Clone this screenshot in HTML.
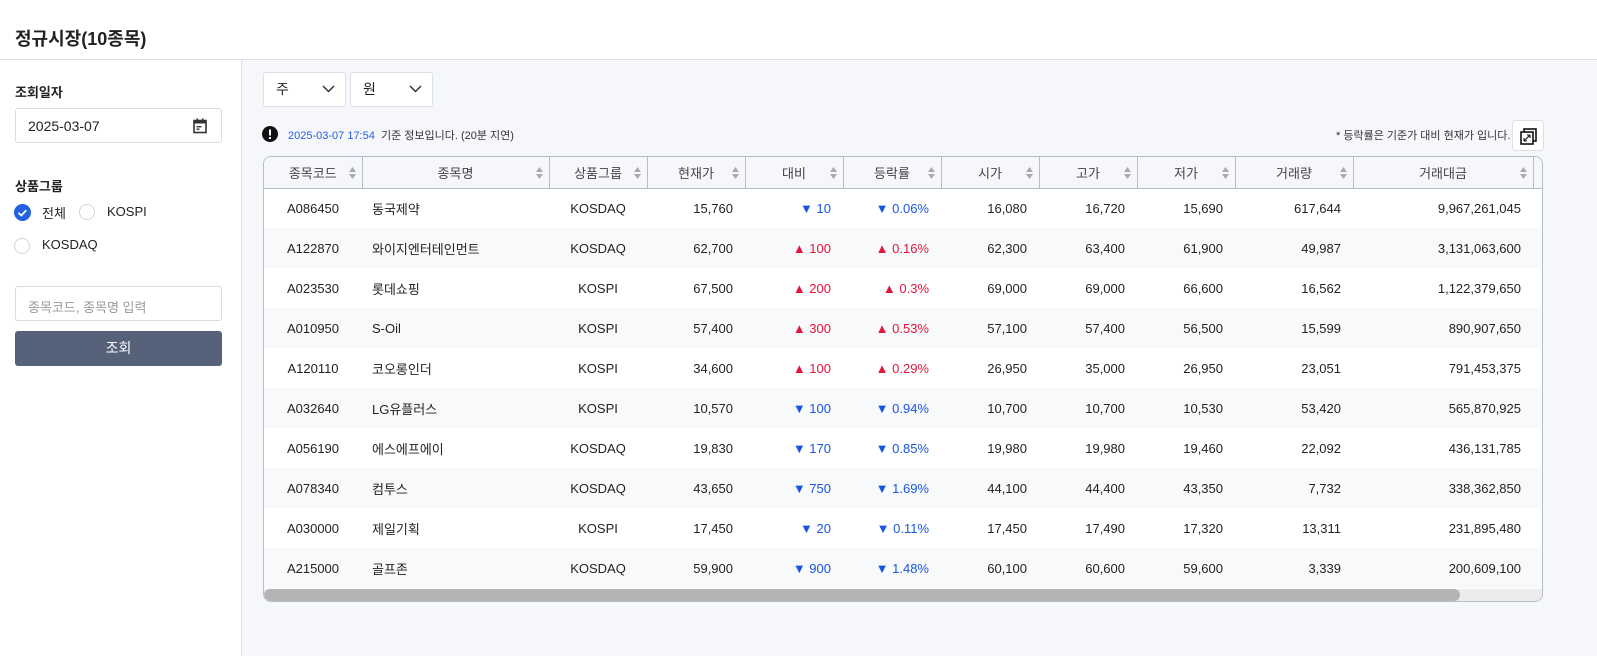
<!DOCTYPE html>
<html><head><meta charset="utf-8"><style>
*{box-sizing:border-box;margin:0;padding:0}
body{width:1597px;height:656px;overflow:hidden;background:#f6f7fa;font-family:"Liberation Sans","Noto Sans CJK KR",sans-serif;color:#222;font-size:13px;position:relative}
.hdr{position:absolute;left:0;top:0;width:1597px;height:60px;background:#fff;border-bottom:1px solid #dcdfe5}
.hdr h1{position:absolute;left:15px;top:25px;font-size:18px;font-weight:bold;color:#222}
.left{position:absolute;left:0;top:60px;width:242px;height:596px;background:#fff;border-right:1px solid #dcdfe5}
.lbl{position:absolute;left:15px;font-size:13px;font-weight:bold}
.inp{position:absolute;left:15px;width:207px;height:35px;border:1px solid #d8dce3;border-radius:3px;background:#fff}
.btn{position:absolute;left:15px;top:271px;width:207px;height:35px;background:#56627a;border-radius:3px;color:#fff;font-size:14px;text-align:center;line-height:35px}
.rad{position:absolute;width:16px;height:16px;border-radius:50%;border:1px solid #d0d4db;background:#fff}
.sel{position:absolute;top:72px;height:35px;width:83px;background:#fff;border:1px solid #dcdfe5;border-radius:3px;font-size:14px;line-height:33px;padding-left:12px}
.sel svg{position:absolute;right:10px;top:12px}
.tw{position:absolute;left:263px;top:156px;width:1280px;height:446px;border:1px solid #b5bdcc;border-radius:8px;overflow:hidden;background:#fff}
table{border-collapse:collapse;table-layout:fixed;width:1400px}
th{height:31px;background:#f5f7fb;border-right:1px solid #b5bdcc;border-bottom:1px solid #b5bdcc;font-weight:normal;color:#444;font-size:13px;position:relative}
td{height:40px;font-size:13px;color:#222}
tr.a td{background:#f7f9fb}
.c{text-align:center}.r{text-align:right;padding-right:12px}.l{padding-left:10px}
.u{color:#e0163c}.d{color:#1a55e0}
.sb{position:absolute;left:0;top:432px;width:1280px;height:12px;background:#ececec}
.sb div{width:1196px;height:12px;background:#b4b4b4;border-radius:6px}
</style></head><body>
<div class="hdr"><h1>정규시장(10종목)</h1></div>
<div class="left">
<div class="lbl" style="top:22px">조회일자</div>
<div class="inp" style="top:48px;padding:9px 0 0 12px;font-size:14px">2025-03-07
<svg style="position:absolute;right:14px;top:9px" width="14" height="16" viewBox="0 0 14 16"><rect x="1" y="2.5" width="12" height="12" fill="none" stroke="#333" stroke-width="1.6"/><rect x="1" y="2.5" width="12" height="3" fill="#333"/><rect x="3.5" y="0.5" width="1.6" height="3" fill="#333"/><rect x="8.9" y="0.5" width="1.6" height="3" fill="#333"/><rect x="3.5" y="8" width="5" height="1.4" fill="#333"/><rect x="3.5" y="10.5" width="3" height="1.4" fill="#333"/></svg></div>
<div class="lbl" style="top:116px">상품그룹</div>
<svg style="position:absolute;left:14px;top:144px" width="17" height="17"><circle cx="8.5" cy="8.5" r="8.5" fill="#2360e0"/><path d="M4.5 8.7l2.8 2.8 5-5.2" fill="none" stroke="#fff" stroke-width="1.8"/></svg>
<div style="position:absolute;left:42px;top:143px">전체</div>
<div class="rad" style="left:79px;top:144px"></div>
<div style="position:absolute;left:107px;top:144px">KOSPI</div>
<div class="rad" style="left:14px;top:178px"></div>
<div style="position:absolute;left:42px;top:177px">KOSDAQ</div>
<div class="inp" style="top:226px;padding:10px 0 0 12px;color:#999;font-size:13px">종목코드, 종목명 입력</div>
<div class="btn">조회</div>
</div>
<div class="sel" style="left:263px">주<svg width="13" height="8"><path d="M1 1l5.5 5.5L12 1" fill="none" stroke="#333" stroke-width="1.5"/></svg></div>
<div class="sel" style="left:350px">원<svg width="13" height="8"><path d="M1 1l5.5 5.5L12 1" fill="none" stroke="#333" stroke-width="1.5"/></svg></div>
<svg style="position:absolute;left:262px;top:126px" width="16" height="16"><circle cx="8" cy="8" r="8" fill="#111"/><rect x="7" y="3.5" width="2" height="6" fill="#fff"/><rect x="7" y="11" width="2" height="2" fill="#fff"/></svg>
<div style="position:absolute;left:288px;top:127px;font-size:11px;color:#333"><span style="color:#2360e0">2025-03-07 17:54</span>&nbsp; 기준 정보입니다. (20분 지연)</div>
<div style="position:absolute;left:1336px;top:127px;font-size:11px;color:#333">* 등락률은 기준가 대비 현재가 입니다.</div>
<div style="position:absolute;left:1512px;top:120px;width:32px;height:31px;background:#fff;border:1px solid #dcdfe5;border-radius:4px">
<svg style="position:absolute;left:7px;top:7px" width="17" height="17" viewBox="0 0 17 17"><rect x="4" y="1" width="12" height="12" fill="none" stroke="#111" stroke-width="1.6"/><rect x="1" y="4" width="12" height="12" fill="#fff" stroke="#111" stroke-width="1.6"/><path d="M4 13l6-6M4 13v-3M4 13h3M10 7h-3M10 7v3" stroke="#111" stroke-width="1.1" fill="none"/></svg></div>
<div class="tw">
<table>
<colgroup><col style="width:98px"><col style="width:187px"><col style="width:98px"><col style="width:98px"><col style="width:98px"><col style="width:98px"><col style="width:98px"><col style="width:98px"><col style="width:98px"><col style="width:118px"><col style="width:180px"><col style="width:131px"></colgroup>
<tr><th>종목코드</th><th>종목명</th><th>상품그룹</th><th>현재가</th><th>대비</th><th>등락률</th><th>시가</th><th>고가</th><th>저가</th><th>거래량</th><th>거래대금</th><th></th></tr>
<tr><td class="c">A086450</td><td class="l">동국제약</td><td class="c">KOSDAQ</td><td class="r">15,760</td><td class="r d">▼ 10</td><td class="r d">▼ 0.06%</td><td class="r">16,080</td><td class="r">16,720</td><td class="r">15,690</td><td class="r">617,644</td><td class="r">9,967,261,045</td><td></td></tr>
<tr class="a"><td class="c">A122870</td><td class="l">와이지엔터테인먼트</td><td class="c">KOSDAQ</td><td class="r">62,700</td><td class="r u">▲ 100</td><td class="r u">▲ 0.16%</td><td class="r">62,300</td><td class="r">63,400</td><td class="r">61,900</td><td class="r">49,987</td><td class="r">3,131,063,600</td><td></td></tr>
<tr><td class="c">A023530</td><td class="l">롯데쇼핑</td><td class="c">KOSPI</td><td class="r">67,500</td><td class="r u">▲ 200</td><td class="r u">▲ 0.3%</td><td class="r">69,000</td><td class="r">69,000</td><td class="r">66,600</td><td class="r">16,562</td><td class="r">1,122,379,650</td><td></td></tr>
<tr class="a"><td class="c">A010950</td><td class="l">S-Oil</td><td class="c">KOSPI</td><td class="r">57,400</td><td class="r u">▲ 300</td><td class="r u">▲ 0.53%</td><td class="r">57,100</td><td class="r">57,400</td><td class="r">56,500</td><td class="r">15,599</td><td class="r">890,907,650</td><td></td></tr>
<tr><td class="c">A120110</td><td class="l">코오롱인더</td><td class="c">KOSPI</td><td class="r">34,600</td><td class="r u">▲ 100</td><td class="r u">▲ 0.29%</td><td class="r">26,950</td><td class="r">35,000</td><td class="r">26,950</td><td class="r">23,051</td><td class="r">791,453,375</td><td></td></tr>
<tr class="a"><td class="c">A032640</td><td class="l">LG유플러스</td><td class="c">KOSPI</td><td class="r">10,570</td><td class="r d">▼ 100</td><td class="r d">▼ 0.94%</td><td class="r">10,700</td><td class="r">10,700</td><td class="r">10,530</td><td class="r">53,420</td><td class="r">565,870,925</td><td></td></tr>
<tr><td class="c">A056190</td><td class="l">에스에프에이</td><td class="c">KOSDAQ</td><td class="r">19,830</td><td class="r d">▼ 170</td><td class="r d">▼ 0.85%</td><td class="r">19,980</td><td class="r">19,980</td><td class="r">19,460</td><td class="r">22,092</td><td class="r">436,131,785</td><td></td></tr>
<tr class="a"><td class="c">A078340</td><td class="l">컴투스</td><td class="c">KOSDAQ</td><td class="r">43,650</td><td class="r d">▼ 750</td><td class="r d">▼ 1.69%</td><td class="r">44,100</td><td class="r">44,400</td><td class="r">43,350</td><td class="r">7,732</td><td class="r">338,362,850</td><td></td></tr>
<tr><td class="c">A030000</td><td class="l">제일기획</td><td class="c">KOSPI</td><td class="r">17,450</td><td class="r d">▼ 20</td><td class="r d">▼ 0.11%</td><td class="r">17,450</td><td class="r">17,490</td><td class="r">17,320</td><td class="r">13,311</td><td class="r">231,895,480</td><td></td></tr>
<tr class="a"><td class="c">A215000</td><td class="l">골프존</td><td class="c">KOSDAQ</td><td class="r">59,900</td><td class="r d">▼ 900</td><td class="r d">▼ 1.48%</td><td class="r">60,100</td><td class="r">60,600</td><td class="r">59,600</td><td class="r">3,339</td><td class="r">200,609,100</td><td></td></tr>
</table>
<div class="sb"><div></div></div>
</div>
<script>
document.querySelectorAll('th').forEach(function(t,i){if(i<11){t.innerHTML=t.textContent+'<svg style="position:absolute;right:6px;top:10px" width="7" height="12"><path d="M3.5 0L7 5H0z" fill="#aaa"/><path d="M3.5 12L7 7H0z" fill="#aaa"/></svg>';}});
</script>
</body></html>
